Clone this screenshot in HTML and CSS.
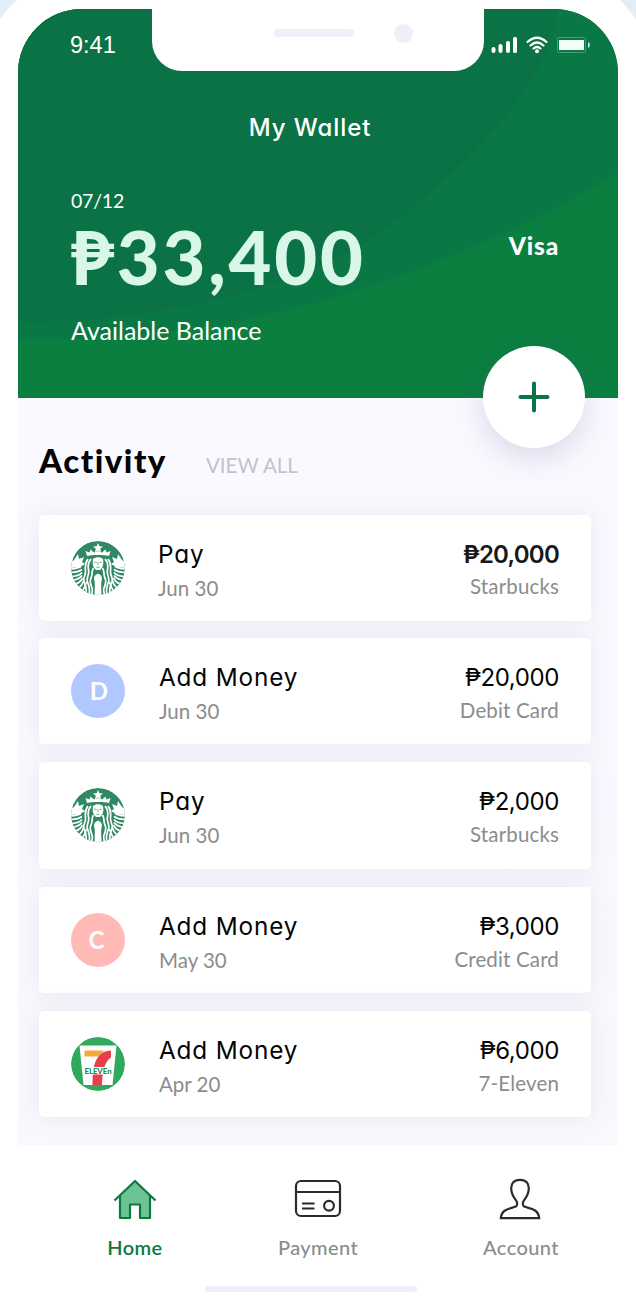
FILE: index.html
```html
<!DOCTYPE html>
<html lang="en">
<head>
<meta charset="utf-8">
<title>My Wallet</title>
<link rel="stylesheet" href="styles.css">
</head>
<body>
<svg class="defs" width="0" height="0" aria-hidden="true">
  <defs>
    <clipPath id="disc"><circle cx="27" cy="27" r="27"/></clipPath>
    <symbol id="siren" viewBox="0 0 54 54">
      <g clip-path="url(#disc)">
        <rect width="54" height="54" fill="#308964"/>
        <g id="siren-half">
          <path d="M0 21 3 19 7 13l1 5 5-2-2 5 3 2-5 3-9 1z" fill="#fff"/>
          <path d="M0 28c5-.5 8-1 10-2.500M0 31.500c5-.3 9-1.500 11-3M1 35.500c4-.3 8-1.500 10-4M2 39.500c4-1 7-2.500 9-5M4.500 43c3-1 5.500-3 7-6M8 47c2-2 4-4.500 5-8M11.500 50c2-3 3-6 4-9" fill="none" stroke="#fff" stroke-width="1.700"/>
          <path d="M17 18c-3 4-3 8-2.500 12s-3 7-1.500 11 3.500 5 1.500 14M20 18c-3.500 4-3 9-2.300 12s-2.700 7-1.200 11 3 6 1.500 13M22.500 27c-2.500 4-.5 6-2.500 10s0 7 1 10-.5 5-.5 8" fill="none" stroke="#fff" stroke-width="1.700"/>
          <path d="M16 15l-1.500-5 4 1.500 1-3 3.500 3 4-1.500v4c-5 0-8 0-11 1z" fill="#fff"/>
        </g>
        <use href="#siren-half" transform="matrix(-1 0 0 1 54 0)"/>
        <path d="M22 18c3-2.500 7-2.500 10 0 1 5 0 8.500-3 11h-4c-3-2.500-4-6-3-11z" fill="#fff"/>
        <path d="M27 32.500c4 1.500 4.500 4.500 3.500 7.500-.8 4 0 8 0 14h-7c0-6 .8-10 0-14-1-3-.5-6 3.500-7.500z" fill="#fff"/>
        <path d="m27 2 1.400 3.200 3.600.3-2.800 2.300.9 3.500L27 9.400l-3.100 1.900.9-3.500L22 5.500l3.600-.3z" fill="#fff"/>
        <path d="M23.200 21.500q1.300-.8 2.600 0M28.200 21.500q1.300-.8 2.600 0M27 21.500V24M25.500 26.300h3" fill="none" stroke="#308964" stroke-width=".7"/>
      </g>
    </symbol>
  </defs>
</svg>
<div class="phone">
  <header class="hero">
    <svg class="hero-waves" viewBox="0 0 600 389" aria-hidden="true">
      <path d="M0 330C180 336 345 286 430 248 510 216 560 190 600 162V0H0z" fill="#0a7845"/>
      <path d="M0 313C160 314 300 270 370 218 455 153 530 75 540 0H0z" fill="#0b7245"/>
    </svg>
    <div class="notch"><span class="speaker"></span><span class="camera"></span></div>
    <div class="status">
      <span class="clock">9:41</span>
      <svg class="status-icons" width="102" height="20" viewBox="0 0 102 20" aria-hidden="true">
        <g fill="#fff">
          <rect x="1.500" y="11" width="4" height="6" rx="2"/><rect x="8.500" y="8" width="4" height="9" rx="2"/><rect x="16" y="5" width="4" height="12" rx="2"/><rect x="23" y="1" width="4" height="16" rx="1.500"/>
          <circle cx="47" cy="15.200" r="2"/>
        </g>
        <path d="M37.500 6q9.500-8.500 19 0M40.500 9.500q6.500-6 13 0M43.500 12.500q3.500-3 7 0" fill="none" stroke="#fff" stroke-width="2.200" stroke-linecap="round"/>
        <rect x="67.500" y="1.500" width="28" height="15" rx="2" fill="none" stroke="#4b9b75"/>
        <rect x="69" y="4" width="25" height="10" fill="#f1fff8"/>
        <path d="M98 6v6q2-1 2-3t-2-3" fill="#c7e6d7"/>
      </svg>
    </div>
    <h1 class="title">My Wallet</h1>
    <div class="balance">
      <div class="balance-main">
        <span class="expiry">07/12</span>
        <strong class="amount">₱33,400</strong>
        <span class="caption">Available Balance</span>
      </div>
      <span class="brand">Visa</span>
    </div>
    <button class="add" aria-label="Add">
      <svg width="32" height="32" viewBox="0 0 32 32"><path d="M16 2.500v27M2.500 16h27" stroke="#0b7446" stroke-width="4" stroke-linecap="round"/></svg>
    </button>
  </header>
  <main class="activity">
    <div class="activity-head"><h2>Activity</h2><a class="view-all">VIEW ALL</a></div>
    <ul class="list">
      <li class="card first">
        <svg class="avatar"><use href="#siren"/></svg>
        <div class="what"><span class="name">Pay</span><span class="sub">Jun 30</span></div>
        <div class="sum"><span class="value strong">₱20,000</span><span class="sub">Starbucks</span></div>
      </li>
      <li class="card">
        <span class="avatar letter blue">D</span>
        <div class="what"><span class="name">Add Money</span><span class="sub">Jun 30</span></div>
        <div class="sum"><span class="value">₱20,000</span><span class="sub">Debit Card</span></div>
      </li>
      <li class="card">
        <svg class="avatar"><use href="#siren"/></svg>
        <div class="what"><span class="name">Pay</span><span class="sub">Jun 30</span></div>
        <div class="sum"><span class="value">₱2,000</span><span class="sub">Starbucks</span></div>
      </li>
      <li class="card">
        <span class="avatar letter pink">C</span>
        <div class="what"><span class="name">Add Money</span><span class="sub">May 30</span></div>
        <div class="sum"><span class="value">₱3,000</span><span class="sub">Credit Card</span></div>
      </li>
      <li class="card">
        <svg class="avatar" viewBox="0 0 54 54">
          <circle cx="27" cy="27" r="27" fill="#2faa5c"/>
          <path d="M8.500 8.500h37L41.500 48h-29z" fill="#fff"/>
          <path d="M13.500 13.500H33L28 19.500H13.500z" fill="#f5a83c"/>
          <path d="M40 13.500v7C34 25 31.500 32 31 48h-9.500c0-13 1-22 6-28.500 3-4 7-6 12.500-6z" fill="#e8404a"/>
          <path d="M12.500 30h29v7.500h-29z" fill="#fff"/>
          <text x="27" y="36.700" text-anchor="middle" textLength="27" lengthAdjust="spacingAndGlyphs" class="seven">ELEVEn</text>
        </svg>
        <div class="what"><span class="name">Add Money</span><span class="sub">Apr 20</span></div>
        <div class="sum"><span class="value">₱6,000</span><span class="sub">7-Eleven</span></div>
      </li>
    </ul>
  </main>
  <nav class="tabs">
    <a class="tab active">
      <svg width="46" height="44" viewBox="0 0 46 44"><path d="M8 17 23 3l15 14v23H28V27H18v13H8z" fill="#6cc493"/><path d="M2.500 22.500 23 3l20.500 19.500M8 18v22h10V26.500h10V40h10V18" fill="none" stroke="#0b7a40" stroke-width="2.200" stroke-linejoin="round"/></svg>
      <span>Home</span>
    </a>
    <a class="tab">
      <svg width="48" height="44" viewBox="0 0 48 44"><g fill="none" stroke="#2b2b2b" stroke-width="2.200"><rect x="2" y="3" width="44" height="35" rx="5"/><path d="M2 14h44M8 25.500h12.500M8 30.500h12.500"/><circle cx="35" cy="27.700" r="4.900"/></g></svg>
      <span>Payment</span>
    </a>
    <a class="tab">
      <svg width="44" height="44" viewBox="0 0 44 44"><path d="M21 1.800c-6 0-9 3.500-8.800 9 .2 6 3.300 9.500 5 11.800 1.500 2 1.300 5.400-1 6.200C11 30.500 2.500 31 1.800 40.200h38.400C39.500 31 31 30.500 25.800 28.800c-2.300-.8-2.500-4.200-1-6.200 1.700-2.300 4.800-5.800 5-11.800.2-5.500-2.800-9-8.800-9z" fill="none" stroke="#2b2b2b" stroke-width="2.200"/></svg>
      <span>Account</span>
    </a>
  </nav>
  <div class="home-bar"></div>
</div>
</body>
</html>
```

FILE: styles.css
```css
* { box-sizing: border-box; }
body { margin: 0; width: 636px; height: 1302px; overflow: hidden; background: #e3edf5; font-family: Lato, "Open Sans", sans-serif; }
.defs { display: block; }
.phone { display: flex; flex-direction: column; width: 668px; height: 1340px; margin: -25px -16px 0; padding: 34px 34px 0; border-radius: 98px 98px 30px 30px; background: #fff; }
.hero { position: relative; display: flex; flex-direction: column; flex: none; height: 389px; border-radius: 64px 64px 0 0; background: #0b7f40; color: #fff; }
.hero-waves { position: absolute; inset: 0; width: 600px; height: 389px; border-radius: 64px 64px 0 0; }
.notch { position: absolute; top: -1px; left: 134px; display: flex; align-items: center; width: 332px; height: 63px; padding: 0 71px 13px 122px; justify-content: space-between; border-radius: 0 0 30px 30px; background: #fff; }
.speaker { width: 80px; height: 8px; border-radius: 4px; background: #f0eff7; }
.camera { width: 19px; height: 19px; border-radius: 50%; background: #f0eff7; }
.status { position: relative; display: flex; justify-content: space-between; align-items: center; height: 73px; padding: 0 26px 0 52px; }
.clock { font: 23.500px "Liberation Sans", sans-serif; }
.title { position: relative; margin: 26px 0 0; padding-right: 16px; font: 500 24px/40px Inter, sans-serif; font-feature-settings: "cv11"; text-align: center; letter-spacing: .9px; }
.balance { position: relative; display: flex; justify-content: space-between; padding: 40px 59px 0 53px; }
.balance-main { display: flex; flex-direction: column; }
.expiry { font-size: 19.500px; line-height: 26px; letter-spacing: -.2px; }
.amount { font-size: 74px; line-height: 86px; font-weight: 900; color: #d9f7e9; letter-spacing: 2.800px; }
.caption { margin-top: 13px; font-size: 25px; line-height: 34px; }
.brand { margin-top: 41px; font-size: 24.500px; line-height: 34px; font-weight: 900; letter-spacing: .8px; }
.add { position: absolute; left: 465px; top: 337px; display: grid; place-items: center; width: 102px; height: 102px; padding: 0; border: 0; border-radius: 50%; background: #fff; box-shadow: 0 10px 30px rgba(70, 70, 140, .18); }
.activity { flex: none; height: 747px; padding: 42px 27px 0 21px; background: linear-gradient(#faf9ff, #f8f8fd); overflow: hidden; }
.activity-head { display: flex; align-items: baseline; gap: 39px; height: 75px; }
.activity-head h2 { margin: 0; font-size: 33px; line-height: 40px; font-weight: 900; color: #050505; letter-spacing: 1.500px; }
.view-all { font-size: 20.500px; color: #c3c2ce; }
.list { display: flex; flex-direction: column; gap: 18px; margin: 0; padding: 0; list-style: none; }
.card { display: flex; flex: none; height: 106.200px; padding: 26px 32px 0; border-radius: 5px; background: #fff; box-shadow: 0 0 24px rgba(90, 100, 150, .1); }
.card.first { margin-bottom: -1px; }
.avatar { flex: none; width: 54px; height: 54px; border-radius: 50%; }
.letter { display: grid; place-items: center; color: #fff; font-size: 24px; font-weight: 700; padding: 0 0 2px 2px; }
.blue { background: #b1c7ff; }
.pink { background: #ffbab8; padding: 0 3px 1px 0; }
.seven { font: 900 8px Lato, sans-serif; fill: #169250; }
.what, .sum { display: flex; flex-direction: column; }
.what { margin-left: 34px; }
.sum { margin-left: auto; align-items: flex-end; }
.name { font: 400 24.300px/26px Inter, sans-serif; font-feature-settings: "cv11"; letter-spacing: .85px; color: #050505; }
.first .what { margin-left: 33px; }
.value { font: 400 24px/28px Inter, sans-serif; letter-spacing: -.4px; color: #050505; }
.strong { font-weight: 600; letter-spacing: -.75px; color: #181818; }
.sub { margin-top: 8px; font-size: 20.500px; line-height: 26px; letter-spacing: 0; color: #8c8c8c; }
.sum .sub { margin-top: 5px; letter-spacing: .15px; }
.first .sum .sub { margin-top: 4px; }
.tabs { display: flex; flex: none; height: 141px; padding: 33px 0 0 69px; }
.tab { display: flex; flex-direction: column; align-items: center; width: 96px; margin-right: 87px; color: #8c8c8c; font-size: 20px; line-height: 26px; font-weight: 500; letter-spacing: .4px; }
.tab + .tab { margin-right: 107px; }
.tab + .tab + .tab { margin-right: 0; }
.tab span { margin-top: 12px; }
.tab.active { color: #0b7a40; font-weight: 600; }
.home-bar { flex: none; width: 212px; height: 6px; margin-left: 187px; border-radius: 3px; background: #f0eff7; }
```
